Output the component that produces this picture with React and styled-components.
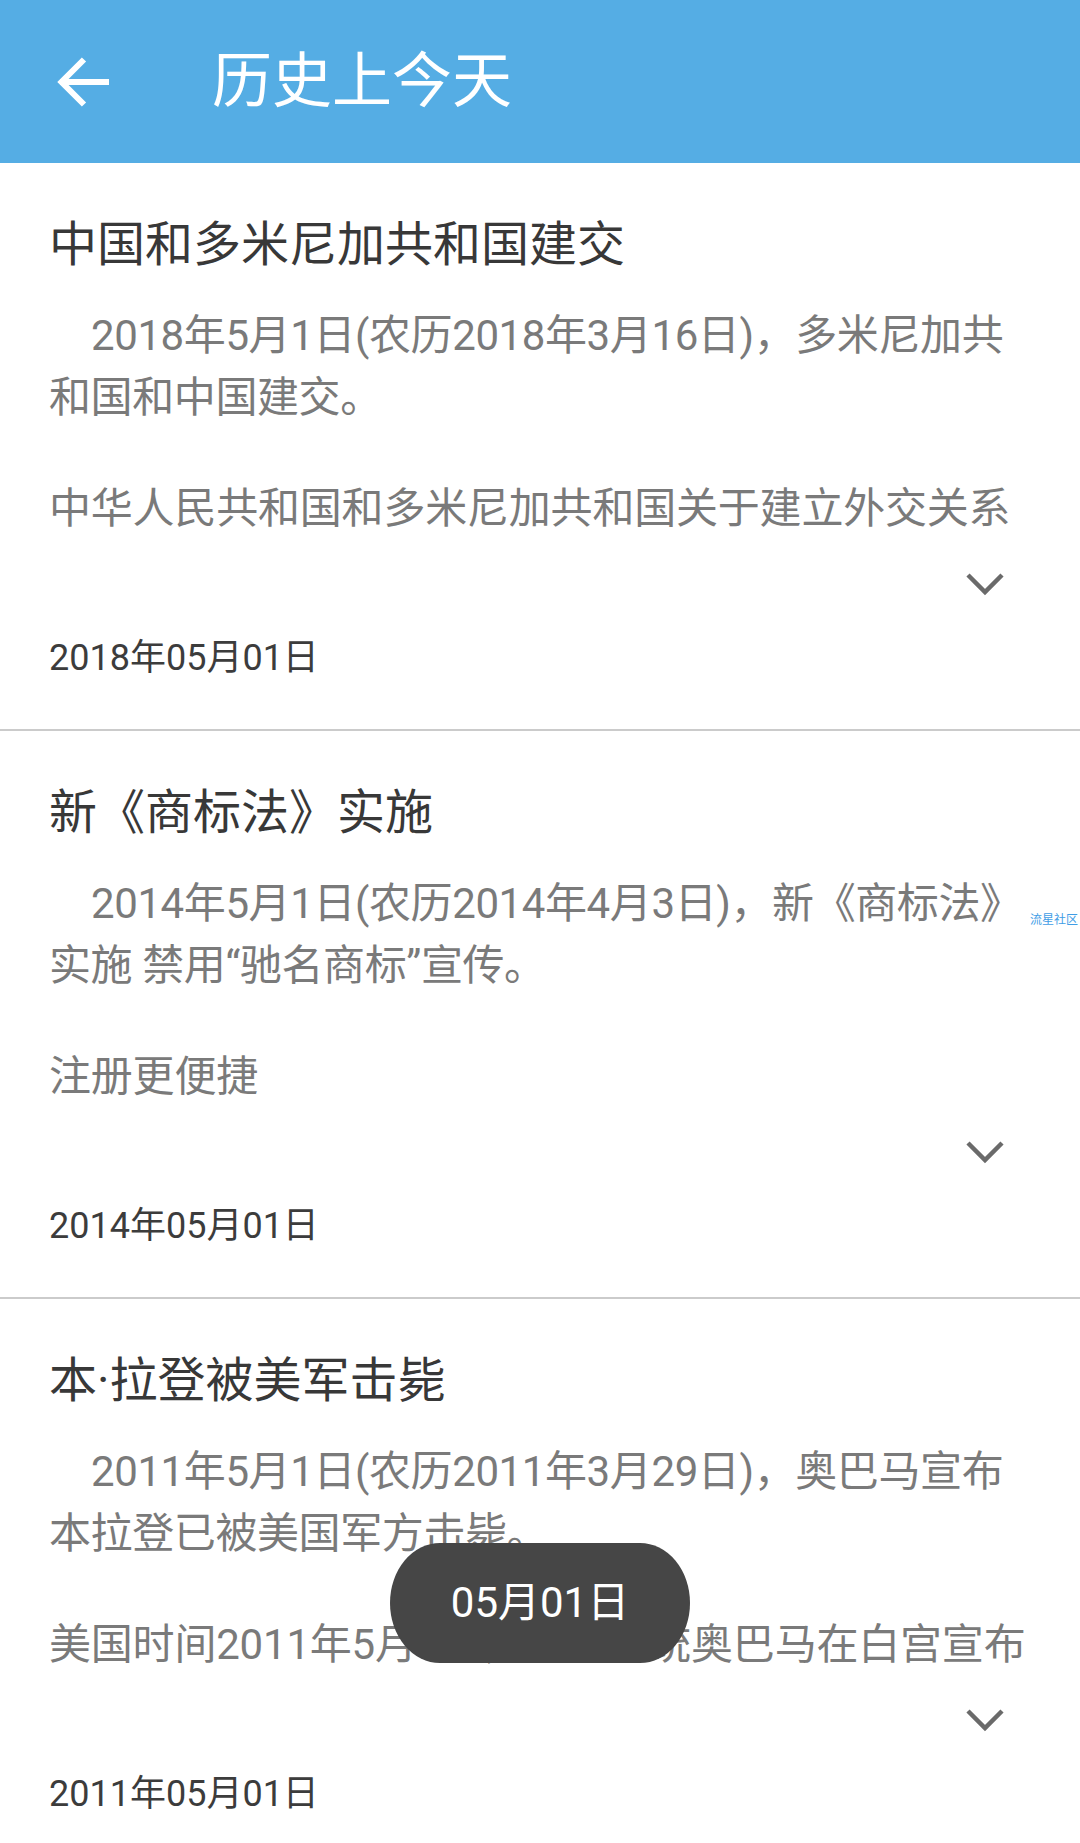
import React from 'react';
import styled, { createGlobalStyle } from 'styled-components';

const GlobalStyle = createGlobalStyle`
  html, body {
    margin: 0;
    padding: 0;
    overflow: hidden;
    background: #fff;
    font-family: Roboto, "Noto Sans CJK SC", "Noto Sans", sans-serif;
  }
`;

const Page = styled.div`
  position: relative;
  width: 1080px;
  min-height: 1843px;
  background: #fff;
`;

const TopBar = styled.header`
  display: flex;
  align-items: center;
  height: 163px;
  padding-left: 56px;
  background: #55ade4;
`;

const BackButton = styled.button`
  display: flex;
  width: 54px;
  height: 52px;
  padding: 0;
  border: 0;
  background: none;
  cursor: pointer;
`;

const BarTitle = styled.h1`
  margin: 0 0 0 102px;
  font-size: 60px;
  font-weight: 400;
  line-height: 1;
  color: #fff;
`;

const List = styled.main`
  display: flex;
  flex-direction: column;
`;

const Card = styled.article`
  display: flex;
  flex-direction: column;
  padding: 54px 38px 51px 49px;
  border-bottom: 2px solid #cbcbcb;
`;

const Title = styled.h2`
  margin: 0;
  font-size: 48px;
  font-weight: 400;
  line-height: 56px;
  color: #383838;
`;

const Summary = styled.p`
  margin: 32px 0 0;
  font-size: 42px;
  line-height: 62px;
  letter-spacing: -0.4px;
  text-indent: 1em;
  color: #7a7a7a;
`;

const Preview = styled.p`
  margin: 49px 11px 0 0;
  font-size: 42px;
  line-height: 62px;
  letter-spacing: -0.2px;
  color: #7a7a7a;
  white-space: nowrap;
  overflow: hidden;
`;

const ExpandRow = styled.div`
  display: flex;
  justify-content: flex-end;
  align-items: center;
  height: 40px;
  margin-top: 24px;
  padding-right: 37px;
`;

const DateLine = styled.div`
  margin-top: 34px;
  font-size: 36px;
  line-height: 40px;
  color: #3c3c3c;
`;

const Watermark = styled.span`
  position: absolute;
  top: 914px;
  left: 1030px;
  font-size: 12px;
  line-height: 1;
  color: #3f9de6;
  white-space: nowrap;
`;

const Toast = styled.div`
  position: fixed;
  top: 1543px;
  left: 50%;
  transform: translateX(-50%);
  display: flex;
  align-items: center;
  justify-content: center;
  width: 300px;
  height: 120px;
  border-radius: 50px / 60px;
  background: #464646;
  color: #fff;
  font-size: 42px;
  line-height: 1;
`;

const events = [
  {
    title: '中国和多米尼加共和国建交',
    summary: '2018年5月1日(农历2018年3月16日)，多米尼加共和国和中国建交。',
    preview: '中华人民共和国和多米尼加共和国关于建立外交关系',
    date: '2018年05月01日',
  },
  {
    title: '新《商标法》实施',
    summary: '2014年5月1日(农历2014年4月3日)，新《商标法》实施 禁用“驰名商标”宣传。',
    preview: '注册更便捷',
    date: '2014年05月01日',
  },
  {
    title: '本·拉登被美军击毙',
    summary: '2011年5月1日(农历2011年3月29日)，奥巴马宣布本拉登已被美国军方击毙。',
    preview: '美国时间2011年5月1日，美国总统奥巴马在白宫宣布',
    date: '2011年05月01日',
  },
];

function BackArrow() {
  return (
    <svg width="54" height="52" viewBox="0 0 54 52" fill="none">
      <path d="M4 26H53M28 3.5L5.5 26L28 48.5" stroke="#fff" strokeWidth="6" />
    </svg>
  );
}

function Chevron() {
  return (
    <svg width="40" height="24" viewBox="0 0 40 24" fill="none">
      <polyline points="3,3 20,20 37,3" stroke="#6a6a6a" strokeWidth="4.5" />
    </svg>
  );
}

function EventCard({ item }) {
  return (
    <Card>
      <Title>{item.title}</Title>
      <Summary>{item.summary}</Summary>
      <Preview>{item.preview}</Preview>
      <ExpandRow>
        <Chevron />
      </ExpandRow>
      <DateLine>{item.date}</DateLine>
    </Card>
  );
}

export default function App() {
  return (
    <Page>
      <GlobalStyle />
      <TopBar>
        <BackButton aria-label="返回">
          <BackArrow />
        </BackButton>
        <BarTitle>历史上今天</BarTitle>
      </TopBar>
      <List>
        {events.map((item) => (
          <EventCard key={item.date} item={item} />
        ))}
      </List>
      <Watermark>流星社区</Watermark>
      <Toast>05月01日</Toast>
    </Page>
  );
}
